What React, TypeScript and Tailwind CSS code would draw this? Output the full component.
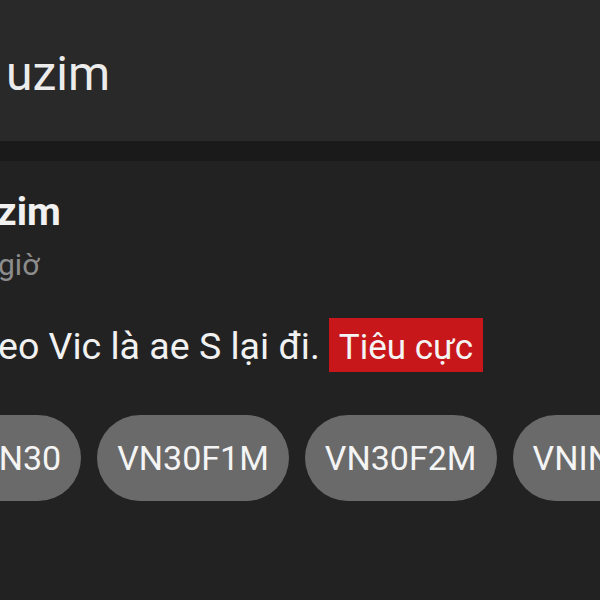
export default function App() {
  const chips = ["VN30", "VN30F1M", "VN30F2M", "VNINDEX"];
  return (
    <div className="w-[600px] h-[600px] overflow-hidden bg-[#222222] font-['Roboto',sans-serif] text-[#f1f1f1]">
      {/* top bar */}
      <div className="h-[141px] bg-[#292929] pt-[50px] pl-[6px]">
        <div className="text-[48px] leading-[48px] text-[#ececec]">uzim</div>
      </div>
      <div className="h-[20px] bg-[#1a1a1a]" />

      {/* post */}
      <div className="pt-[32px]">
        <div className="-ml-[25px] text-[39px] leading-[39px] font-bold whitespace-nowrap">uzim</div>
        <div className="mt-[18px] -ml-[2px] text-[30px] leading-[30px] text-[#8c8c8c] whitespace-nowrap">giờ</div>
        <div className="mt-[38px] -ml-[2px] flex items-baseline whitespace-nowrap">
          <span className="text-[37.5px] leading-[36px]">eo Vic là ae S lại đi.</span>
          <span className="ml-[9px] bg-[#c8171b] px-[10px] pt-[9px] pb-[3px] text-[35px] leading-[42px] text-[#f4f4f4]">
            Tiêu cực
          </span>
        </div>
        <div className="mt-[43px] -ml-[43px] flex gap-[16px] whitespace-nowrap">
          {chips.map((c) => (
            <div
              key={c}
              className="h-[86px] shrink-0 rounded-full bg-[#6a6a6a] px-[20px] flex items-center text-[34px] leading-[34px] text-[#f4f4f4]"
            >
              {c}
            </div>
          ))}
        </div>
      </div>
    </div>
  );
}
